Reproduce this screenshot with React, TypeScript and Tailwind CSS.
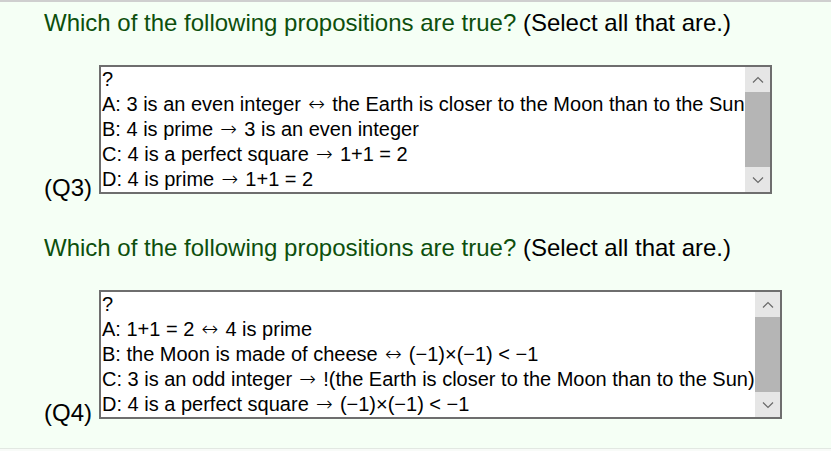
import React from "react";

const ChevUp = () => (
  <svg width="12" height="8" viewBox="0 0 12 8">
    <path d="M1 6.5 L6 1.5 L11 6.5" fill="none" stroke="#6a6a6a" strokeWidth="1.2" />
  </svg>
);
const ChevDown = () => (
  <svg width="12" height="8" viewBox="0 0 12 8">
    <path d="M1 1.5 L6 6.5 L11 1.5" fill="none" stroke="#6a6a6a" strokeWidth="1.2" />
  </svg>
);

function renderLine(l: string) {
  const parts = l.split(/([\u2192\u2194])/);
  return parts.map((p, i) =>
    p === "\u2192" || p === "\u2194" ? (
      <span
        key={i}
        className="inline-block w-[20px] text-center text-[20px] leading-none font-['DejaVu_Sans'] font-extralight"
      >
        {p}
      </span>
    ) : (
      <React.Fragment key={i}>{p}</React.Fragment>
    )
  );
}

function ListBox({ lines, width }: { lines: string[]; width: string }) {
  return (
    <div className={`flex h-[129px] border-2 border-[#6e6e6e] bg-white ${width}`}>
      <div className="flex-1 pl-[1px] pt-0 overflow-hidden">
        {lines.map((l, i) => (
          <div key={i} className="h-[25px] leading-[25px] text-[20px] text-black whitespace-nowrap">
            {renderLine(l)}
          </div>
        ))}
      </div>
      <div className="w-[25px] flex flex-col bg-[#e6e6e6]">
        <div className="h-[25px] flex items-center justify-center">
          <ChevUp />
        </div>
        <div className="flex-1 bg-[#b5b5b5]" />
        <div className="h-[25px] flex items-center justify-center">
          <ChevDown />
        </div>
      </div>
    </div>
  );
}

function Heading({ mt }: { mt: string }) {
  return (
    <div className={`${mt} h-[28px] leading-[28px] text-[24px] whitespace-nowrap`}>
      <span className="text-[#0d4f0d]">Which of the following propositions are true?</span>{" "}
      <span className="text-black">(Select all that are.)</span>
    </div>
  );
}

export default function App() {
  const q3 = [
    "?",
    "A: 3 is an even integer \u2194 the Earth is closer to the Moon than to the Sun",
    "B: 4 is prime \u2192 3 is an even integer",
    "C: 4 is a perfect square \u2192 1+1 = 2",
    "D: 4 is prime \u2192 1+1 = 2",
  ];
  const q4 = [
    "?",
    "A: 1+1 = 2 \u2194 4 is prime",
    "B: the Moon is made of cheese \u2194 (\u22121)\u00d7(\u22121) < \u22121",
    "C: 3 is an odd integer \u2192 !(the Earth is closer to the Moon than to the Sun)",
    "D: 4 is a perfect square \u2192 (\u22121)\u00d7(\u22121) < \u22121",
  ];
  return (
    <div
      className="w-[831px] h-[451px] overflow-hidden bg-[#f5fff5] border-t-2 border-[#cfcfcf] flex flex-col"
      style={{ fontFamily: '"Liberation Sans", Arial, sans-serif' }}
    >
      <div className="flex-1 pl-[44px]">
        <Heading mt="mt-[7px]" />
        <div className="mt-[28px] flex items-end">
          <div className="text-[24px] leading-[25px] text-black mb-[-6px] w-[55px]">(Q3)</div>
          <ListBox lines={q3} width="w-[673px]" />
        </div>
        <Heading mt="mt-[40px]" />
        <div className="mt-[28px] flex items-end">
          <div className="text-[24px] leading-[25px] text-black mb-[-6px] w-[55px]">(Q4)</div>
          <ListBox lines={q4} width="w-[683px]" />
        </div>
      </div>
      <div className="h-[3px] border-t border-[#e2e8e2] bg-[#f8fbf8]" />
    </div>
  );
}
